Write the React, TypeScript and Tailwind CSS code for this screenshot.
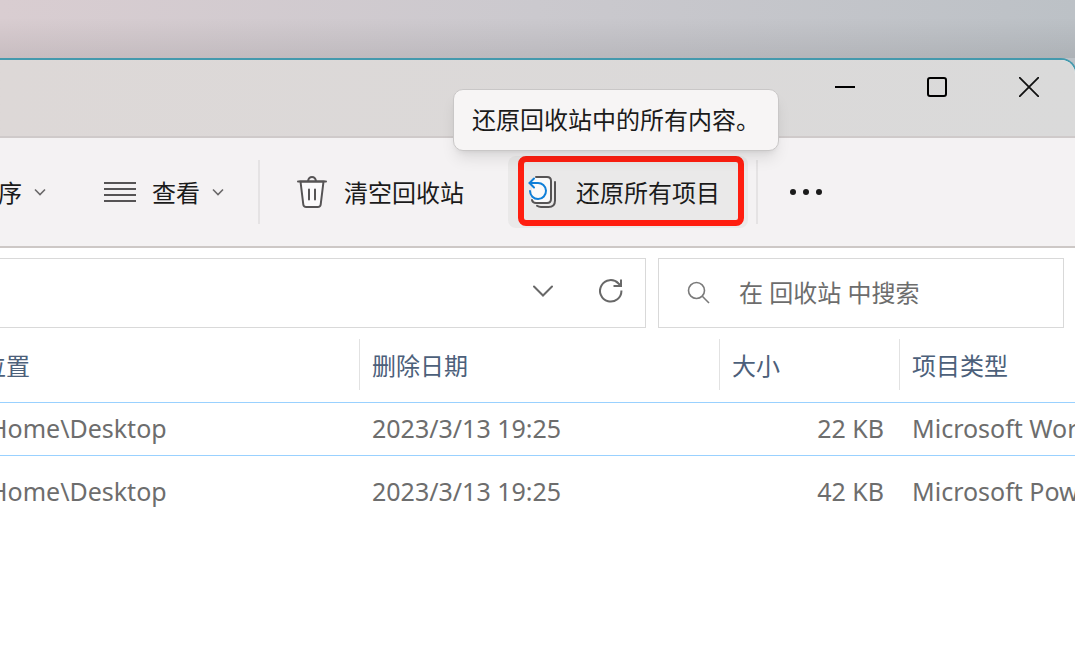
import React from "react";

const files = [
  { path: "Home\\Desktop", deleted: "2023/3/13 19:25", size: "22 KB", type: "Microsoft Word 文档", focused: true },
  { path: "Home\\Desktop", deleted: "2023/3/13 19:25", size: "42 KB", type: "Microsoft PowerPoint 演示文稿", focused: false },
];

const SmallChevron = () => (
  <svg width="12" height="8" viewBox="0 0 12 8" fill="none" stroke="#6b696a" strokeWidth="1.6">
    <path d="M1 1.5l5 5 5-5" />
  </svg>
);

const TrashIcon = () => (
  <svg width="32" height="34" viewBox="0 0 32 34" fill="none" stroke="#565455" strokeWidth="2" strokeLinecap="round">
    <path d="M4.500 6.500l2.800 23c.2 1.800 1.300 2.500 3 2.500h11.400c1.700 0 2.800-.7 3-2.500l2.800-23z" fill="#fbfafb" />
    <path d="M2 6.500h28M12 6c.5-2.600 2-4 4-4s3.500 1.400 4 4M13 14.500v10M19 14.500v10" />
  </svg>
);

const RestoreIcon = () => (
  <svg width="30" height="34" viewBox="0 0 30 34" fill="none" strokeWidth="2" strokeLinecap="round">
    <path d="M8 2h11c2.500 0 4 1.500 4 4v18c0 2.500-1.500 4-4 4H8c-2.500 0-4-1.500-4-4V6c0-2 1.500-4 4-4z" fill="#fafafa" />
    <path d="M8 2h11c2.500 0 4 1.500 4 4v18c0 2.500-1.500 4-4 4H8c-2.200 0-3.500-1-4-3" stroke="#565455" />
    <path d="M27 7v18.500c0 4-2.500 6.500-6.500 6.500H13c-2 0-3-.5-4-1.200" stroke="#565455" />
    <path d="M2 8h7.500a8 8 0 1 1-7.500 8M6 3.500L1.500 8 6 12.500" stroke="#0f7fd8" />
  </svg>
);

export default function App() {
  return (
    <div className="min-h-screen overflow-hidden bg-gradient-to-r from-[#d9cdd1] via-[#cbc9ce] to-[#bcc1c6] font-['Noto_Sans','Noto_Sans_CJK_SC',sans-serif] text-2xl text-[#1b1b1b]">
      {/* Desktop strip above the window */}
      <div className="h-[58px] bg-gradient-to-b from-black/0 from-30% to-black/8" />

      <div className="flex min-h-[calc(100vh-58px)] flex-col -mr-[2px] overflow-hidden rounded-tr-2xl border-t-2 border-r-2 border-[#4499ad] bg-white">
        {/* Title bar */}
        <header className="flex h-[78px] justify-end border-b-2 border-[#cfcaca] bg-gradient-to-r from-[#ddd8d7] to-[#dadada]">
          <button aria-label="最小化" className="flex h-[54px] w-[92px] items-center justify-center">
            <svg width="20" height="20" viewBox="0 0 20 20" stroke="#000" strokeWidth="2">
              <path d="M0 10h20" />
            </svg>
          </button>
          <button aria-label="最大化" className="flex h-[54px] w-[92px] items-center justify-center">
            <svg width="20" height="20" viewBox="0 0 20 20" fill="none" stroke="#000" strokeWidth="2">
              <rect x="1" y="1" width="18" height="18" rx="2" />
            </svg>
          </button>
          <button aria-label="关闭" className="flex h-[54px] w-[92px] items-center justify-center">
            <svg width="20" height="20" viewBox="0 0 20 20" stroke="#111" strokeWidth="1.800">
              <path d="M0 0l20 20M20 0L0 20" />
            </svg>
          </button>
        </header>

        {/* Command bar */}
        <nav className="flex h-[110px] items-center border-b-2 border-[#cdc8c6] bg-[#f4f2f3] whitespace-nowrap">
          <button className="-ml-[26px] flex shrink-0 items-center gap-3">
            <span className="pt-[2px]">排序</span>
            <SmallChevron />
          </button>
          <button className="ml-[58px] flex shrink-0 items-center">
            <svg className="mr-4" width="32" height="20" viewBox="0 0 32 20" stroke="#565455" strokeWidth="2">
              <path d="M0 1h32M0 7h32M0 13h32M0 19h32" />
            </svg>
            <span className="mr-3 pt-[2px]">查看</span>
            <SmallChevron />
          </button>
          <div className="ml-[34px] h-16 w-[2px] shrink-0 bg-[#e5e3e4]" />
          <button className="ml-9 flex shrink-0 items-center gap-4">
            <TrashIcon />
            <span className="pt-[2px]">清空回收站</span>
          </button>
          <div className="relative ml-11 shrink-0">
            <button aria-describedby="restore-tip" className="flex h-[72px] w-60 items-center gap-[18px] rounded-lg bg-[#eae9e9] pl-5">
              <RestoreIcon />
              <span className="pt-[2px]">还原所有项目</span>
            </button>
            <div className="pointer-events-none absolute top-0 right-1 left-[10px] h-[70px] rounded-lg border-[6px] border-[#ff1e10]" />
            <div
              id="restore-tip"
              role="tooltip"
              className="absolute bottom-full left-[-55px] mb-[5px] flex h-[62px] w-[326px] items-center rounded-[10px] border border-[#c9c7c7] bg-[#f7f5f5] pl-[18px] shadow-lg"
            >
              还原回收站中的所有内容。
            </div>
          </div>
          <div className="ml-2 h-16 w-[2px] shrink-0 bg-[#e5e3e4]" />
          <button aria-label="更多" className="ml-8 shrink-0">
            <svg width="32" height="8" viewBox="0 0 32 8" fill="#1b1b1b">
              <circle cx="3" cy="4" r="3" />
              <circle cx="16" cy="4" r="3" />
              <circle cx="29" cy="4" r="3" />
            </svg>
          </button>
        </nav>

        {/* Address and search */}
        <div className="flex gap-3 pt-[10px] pr-[11px]">
          <div className="flex h-[70px] flex-1 items-center justify-end border border-l-0 border-[#d9d9d9] pr-[22px] pb-1">
            <button aria-label="以前的位置" className="mr-[46px]">
              <svg width="20" height="12" viewBox="0 0 20 12" fill="none" stroke="#686868" strokeWidth="2" strokeLinecap="round">
                <path d="M1 1.500l9 9 9-9" />
              </svg>
            </button>
            <button aria-label="刷新">
              <svg width="24" height="26" viewBox="0 0 24 26" fill="none" stroke="#686868" strokeWidth="2">
                <path d="M22.400 12.500A10.700 10.700 0 1 1 19.500 5.500L22 8M22 1.500V8h-7.500" />
              </svg>
            </button>
          </div>
          <label className="flex h-[70px] w-[406px] items-center gap-7 border border-[#d9d9d9] pl-7">
            <svg width="24" height="24" viewBox="0 0 24 24" fill="none" stroke="#7a7a7a" strokeWidth="1.600">
              <circle cx="9.500" cy="9.500" r="8" />
              <path d="M15.300 15.300l6.700 6.700" />
            </svg>
            <input aria-label="搜索" placeholder="在 回收站 中搜索" className="min-w-0 flex-1 outline-none placeholder:text-[#6d6d6d]" />
          </label>
        </div>

        {/* File list */}
        <table className="mt-[11px] w-full table-fixed border-collapse text-left whitespace-nowrap text-[#6d6d6d]">
          <colgroup>
            <col className="w-[360px]" />
            <col className="w-[360px]" />
            <col className="w-[180px]" />
            <col />
          </colgroup>
          <thead>
            <tr className="h-[63px] align-top text-[#4c607a]">
              <th className="p-0 font-normal">
                <div className="flex h-[51px] items-center border-r border-[#e2e2e2] pt-[2px]">
                  <span className="-ml-[18px]">位置</span>
                </div>
              </th>
              <th className="p-0 font-normal">
                <div className="flex h-[51px] items-center border-r border-[#e2e2e2] pt-[2px] pl-3">删除日期</div>
              </th>
              <th className="p-0 font-normal">
                <div className="flex h-[51px] items-center border-r border-[#e2e2e2] pt-[2px] pl-3">大小</div>
              </th>
              <th className="p-0 font-normal">
                <div className="flex h-[51px] items-center pt-[2px] pl-3">项目类型</div>
              </th>
            </tr>
          </thead>
          <tbody className="text-[25px]">
            {files.map((file, i) => (
              <tr key={i} className={file.focused ? "h-[53px] border-y border-[#99d1ff]" : "h-[72px]"}>
                <td className="p-0">
                  <span className="-ml-[11px]">{file.path}</span>
                </td>
                <td className="p-0 pl-3">{file.deleted}</td>
                <td className="p-0 pr-4 text-right">{file.size}</td>
                <td className="overflow-hidden p-0 pl-3">{file.type}</td>
              </tr>
            ))}
          </tbody>
        </table>
      </div>
    </div>
  );
}
